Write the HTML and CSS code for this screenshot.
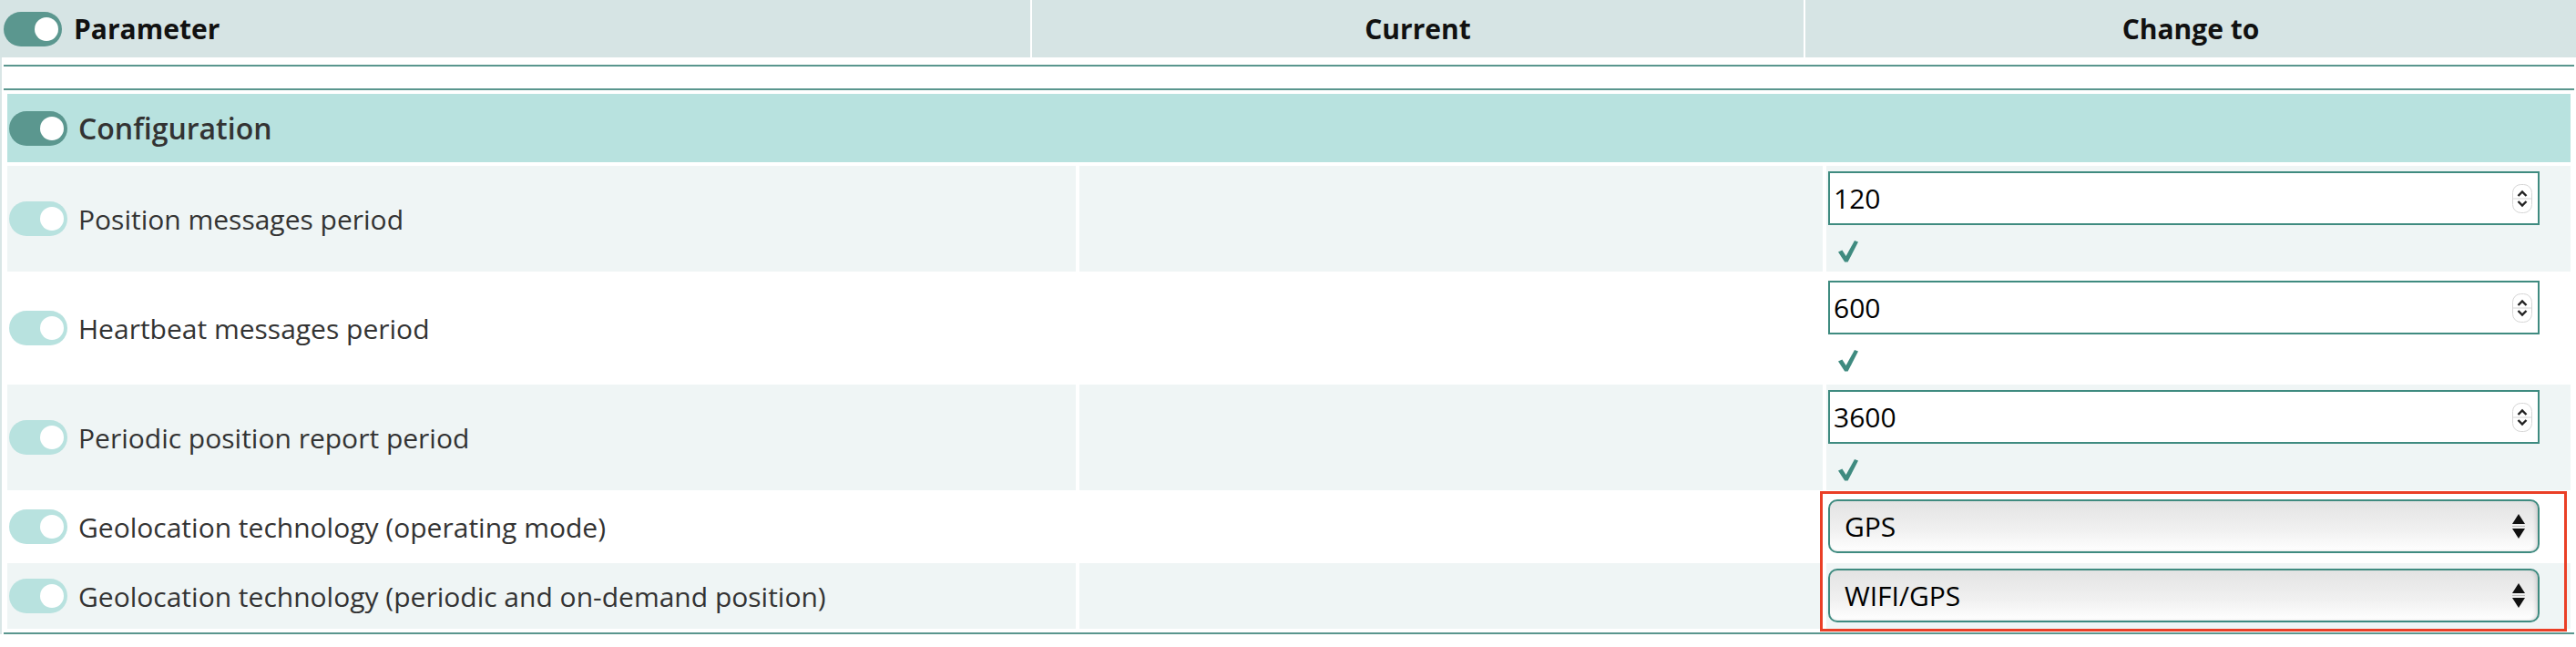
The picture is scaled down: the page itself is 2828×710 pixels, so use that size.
FILE: index.html
```html
<!DOCTYPE html>
<html lang="en">
<head>
<meta charset="utf-8">
<title>Configuration</title>
<link rel="stylesheet" href="styles.css">
</head>
<body>
<div class="page">
  <div class="head">
    <div class="hcell hcell-first"><span class="toggle toggle-dark"><span class="knob"></span></span><span>Parameter</span></div>
    <div class="hcell hcell-center">Current</div>
    <div class="hcell hcell-center">Change to</div>
  </div>
  <div class="content">
    <div class="divider"></div>
    <div class="grid">
      <div class="group"><span class="toggle toggle-dark"><span class="knob"></span></span><span>Configuration</span></div>

      <div class="cell label tint"><span class="toggle toggle-light"><span class="knob"></span></span><span>Position messages period</span></div>
      <div class="cell tint"></div>
      <div class="cell edit tint">
        <div class="num"><span>120</span><svg class="spin" width="22" height="32" viewBox="0 0 22 32"><rect x="0.5" y="0.5" width="21" height="31" rx="9" fill="#fff" stroke="#d6d6d6"/><line x1="1" y1="16" x2="21" y2="16" stroke="#d6d6d6"/><polyline points="6.5,13 11,8.5 15.5,13" fill="none" stroke="#222" stroke-width="2.4"/><polyline points="6.5,19 11,23.5 15.5,19" fill="none" stroke="#222" stroke-width="2.4"/></svg></div>
        <div class="ok"><svg width="22" height="24" viewBox="0 0 22 24"><path d="M0 12.5 L4.4 10.4 L8.6 17 L18 0 L22 1.6 L10.6 23.6 L7.2 23.6 Z" fill="#3f8b80"/></svg></div>
      </div>

      <div class="cell label"><span class="toggle toggle-light"><span class="knob"></span></span><span>Heartbeat messages period</span></div>
      <div class="cell"></div>
      <div class="cell edit">
        <div class="num"><span>600</span><svg class="spin" width="22" height="32" viewBox="0 0 22 32"><rect x="0.5" y="0.5" width="21" height="31" rx="9" fill="#fff" stroke="#d6d6d6"/><line x1="1" y1="16" x2="21" y2="16" stroke="#d6d6d6"/><polyline points="6.5,13 11,8.5 15.5,13" fill="none" stroke="#222" stroke-width="2.4"/><polyline points="6.5,19 11,23.5 15.5,19" fill="none" stroke="#222" stroke-width="2.4"/></svg></div>
        <div class="ok"><svg width="22" height="24" viewBox="0 0 22 24"><path d="M0 12.5 L4.4 10.4 L8.6 17 L18 0 L22 1.6 L10.6 23.6 L7.2 23.6 Z" fill="#3f8b80"/></svg></div>
      </div>

      <div class="cell label tint"><span class="toggle toggle-light"><span class="knob"></span></span><span>Periodic position report period</span></div>
      <div class="cell tint"></div>
      <div class="cell edit tint">
        <div class="num"><span>3600</span><svg class="spin" width="22" height="32" viewBox="0 0 22 32"><rect x="0.5" y="0.5" width="21" height="31" rx="9" fill="#fff" stroke="#d6d6d6"/><line x1="1" y1="16" x2="21" y2="16" stroke="#d6d6d6"/><polyline points="6.5,13 11,8.5 15.5,13" fill="none" stroke="#222" stroke-width="2.4"/><polyline points="6.5,19 11,23.5 15.5,19" fill="none" stroke="#222" stroke-width="2.4"/></svg></div>
        <div class="ok"><svg width="22" height="24" viewBox="0 0 22 24"><path d="M0 12.5 L4.4 10.4 L8.6 17 L18 0 L22 1.6 L10.6 23.6 L7.2 23.6 Z" fill="#3f8b80"/></svg></div>
      </div>

      <div class="cell label"><span class="toggle toggle-light"><span class="knob"></span></span><span>Geolocation technology (operating mode)</span></div>
      <div class="cell"></div>
      <div class="cell edit">
        <div class="sel"><span>GPS</span><svg width="14" height="27" viewBox="0 0 14 27"><polygon points="0,11 7,0 14,11" fill="#111"/><line x1="0" y1="13.5" x2="14" y2="13.5" stroke="#bbb" stroke-width="1"/><polygon points="0,16 14,16 7,27" fill="#111"/></svg></div>
      </div>

      <div class="cell label tint"><span class="toggle toggle-light"><span class="knob"></span></span><span>Geolocation technology (periodic and on-demand position)</span></div>
      <div class="cell tint"></div>
      <div class="cell edit tint">
        <div class="sel"><span>WIFI/GPS</span><svg width="14" height="27" viewBox="0 0 14 27"><polygon points="0,11 7,0 14,11" fill="#111"/><line x1="0" y1="13.5" x2="14" y2="13.5" stroke="#bbb" stroke-width="1"/><polygon points="0,16 14,16 7,27" fill="#111"/></svg></div>
      </div>
    </div>
  </div>
  <div class="highlight"></div>
</div>
</body>
</html>
```

FILE: styles.css
```css
* { box-sizing: border-box; }

body {
  margin: 0;
  background: #fff;
  font-family: "Open Sans", "Liberation Sans", sans-serif;
  color: #333;
}

.page {
  position: relative;
  width: 2828px;
}

.head {
  display: grid;
  grid-template-columns: 1131px 847px 1fr;
  column-gap: 2px;
  height: 63px;
  background: #fff;
}

.hcell {
  background: #d6e4e4;
  display: flex;
  align-items: center;
  font-size: 30px;
  font-weight: 700;
  color: #111;
}

.hcell-first {
  padding-left: 4px;
  gap: 13px;
}

.hcell-center {
  justify-content: center;
}

.content {
  border-left: 2px solid #d9e6e6;
  padding: 8px 2px 0 2px;
}

.divider {
  height: 28px;
  border-top: 2px solid #5a968e;
  border-bottom: 2px solid #5a968e;
}

.grid {
  display: grid;
  grid-template-columns: 1173px 816px 817px;
  gap: 4px;
  padding: 4px;
  border-bottom: 2px solid #5a968e;
}

.group {
  grid-column: 1 / -1;
  height: 75px;
  background: #b8e2df;
  display: flex;
  align-items: center;
  gap: 12px;
  padding-left: 2px;
  font-size: 32px;
  font-weight: 600;
  color: #333;
}

.cell {
  background: #fff;
}

.cell.tint {
  background: #eff5f5;
}

.label {
  display: flex;
  align-items: center;
  gap: 12px;
  padding-left: 2px;
  font-size: 30px;
  color: #333;
}

.edit {
  padding: 6px 0 7px 2px;
}

.toggle {
  position: relative;
  flex: none;
  display: inline-block;
  width: 64px;
  height: 38px;
  border-radius: 19px;
}

.toggle-dark { background: #5b978f; }
.toggle-light { background: #b8e2df; }

.knob {
  position: absolute;
  right: 4px;
  top: 6px;
  width: 26px;
  height: 26px;
  border-radius: 50%;
  background: #fff;
}

.num {
  width: 781px;
  height: 59px;
  border: 2px solid #3f8b80;
  background: #fff;
  display: flex;
  align-items: center;
  justify-content: space-between;
  padding: 0 6px 0 4px;
  font-size: 30px;
  color: #000;
}

.spin { display: block; }

.ok {
  height: 44px;
  padding: 17px 0 0 11px;
}

.ok svg { display: block; }

.sel {
  width: 781px;
  height: 59px;
  border: 2px solid #3f8b80;
  border-radius: 10px;
  background: linear-gradient(#e3e3e3, #f1f1f1 60%, #ffffff);
  box-shadow: inset -4px 0 5px -3px rgba(0, 0, 0, 0.18), inset 0 -2px 3px -2px rgba(0, 0, 0, 0.12);
  display: flex;
  align-items: center;
  justify-content: space-between;
  padding: 0 14px 0 16px;
  font-size: 30px;
  color: #000;
}

.sel svg { display: block; }

.highlight {
  position: absolute;
  left: 1998px;
  top: 539px;
  width: 820px;
  height: 154px;
  border: 3px solid #ea3f26;
}
```
